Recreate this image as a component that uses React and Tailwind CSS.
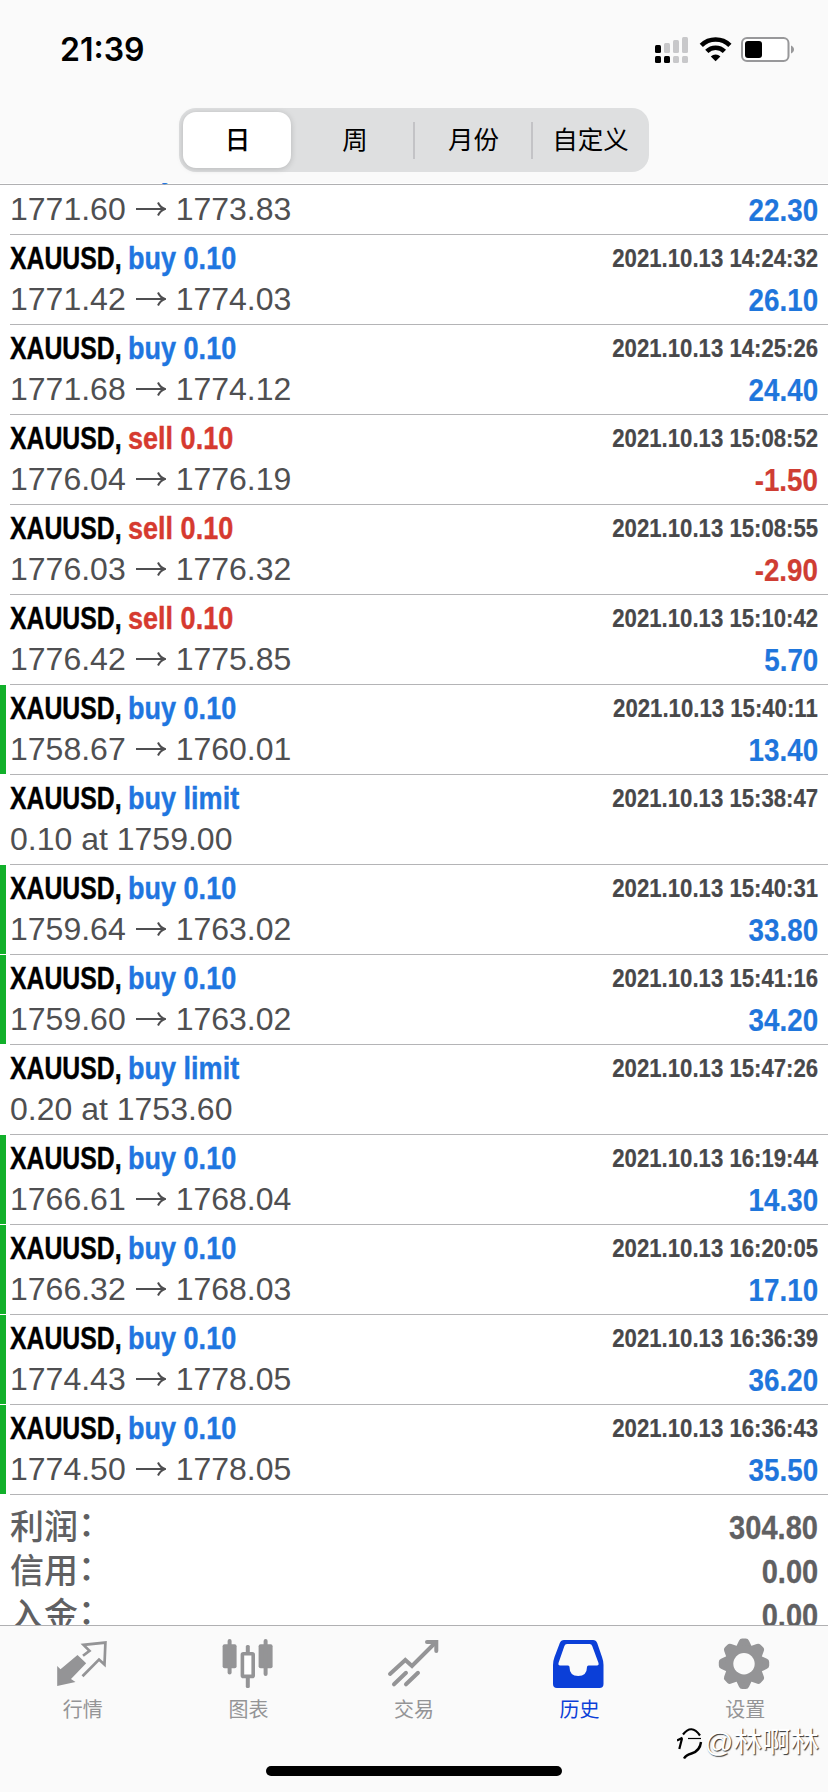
import React from 'react';

const trades = [
  { kind: 'buy 0.10', open: '1771.60', close: '1773.83', profit: '22.30' },
  { kind: 'buy 0.10', time: '2021.10.13 14:24:32', open: '1771.42', close: '1774.03', profit: '26.10' },
  { kind: 'buy 0.10', time: '2021.10.13 14:25:26', open: '1771.68', close: '1774.12', profit: '24.40' },
  { kind: 'sell 0.10', time: '2021.10.13 15:08:52', open: '1776.04', close: '1776.19', profit: '-1.50' },
  { kind: 'sell 0.10', time: '2021.10.13 15:08:55', open: '1776.03', close: '1776.32', profit: '-2.90' },
  { kind: 'sell 0.10', time: '2021.10.13 15:10:42', open: '1776.42', close: '1775.85', profit: '5.70' },
  { kind: 'buy 0.10', time: '2021.10.13 15:40:11', open: '1758.67', close: '1760.01', profit: '13.40', marked: true },
  { kind: 'buy limit', time: '2021.10.13 15:38:47', note: '0.10 at 1759.00' },
  { kind: 'buy 0.10', time: '2021.10.13 15:40:31', open: '1759.64', close: '1763.02', profit: '33.80', marked: true },
  { kind: 'buy 0.10', time: '2021.10.13 15:41:16', open: '1759.60', close: '1763.02', profit: '34.20', marked: true },
  { kind: 'buy limit', time: '2021.10.13 15:47:26', note: '0.20 at 1753.60' },
  { kind: 'buy 0.10', time: '2021.10.13 16:19:44', open: '1766.61', close: '1768.04', profit: '14.30', marked: true },
  { kind: 'buy 0.10', time: '2021.10.13 16:20:05', open: '1766.32', close: '1768.03', profit: '17.10', marked: true },
  { kind: 'buy 0.10', time: '2021.10.13 16:36:39', open: '1774.43', close: '1778.05', profit: '36.20', marked: true },
  { kind: 'buy 0.10', time: '2021.10.13 16:36:43', open: '1774.50', close: '1778.05', profit: '35.50', marked: true },
];

const summary = [
  { label: '利润', value: '304.80' },
  { label: '信用', value: '0.00' },
  { label: '入金', value: '0.00' },
];

const StatusBar = () => (
  <div className="flex h-[108px] items-start justify-between pl-[60px] pr-[33px] pt-[30px]">
    <span className="font-['Inter',sans-serif] text-[32px] font-semibold leading-[40px]">21:39</span>
    <div className="flex items-center pt-[6px]">
      <svg className="h-[28px] w-[34px]" viewBox="0 0 34 28">
        <g fill="#c8c8ca">
          <rect x="9" y="7" width="6" height="10" rx="1.5" />
          <rect x="18" y="4" width="6" height="13" rx="1.5" />
          <rect x="27" y="1" width="6" height="16" rx="1.5" />
          <rect x="18" y="20" width="6" height="7" rx="1.5" />
          <rect x="27" y="20" width="6" height="7" rx="1.5" />
        </g>
        <rect x="0" y="9" width="6" height="8" rx="1.5" />
        <rect x="0" y="20" width="6" height="7" rx="1.5" />
        <rect x="9" y="20" width="6" height="7" rx="1.5" />
      </svg>
      <svg className="ml-[10px] h-[28px] w-[34px]" viewBox="0 0 34 28">
        <g fill="none" stroke="#000" strokeWidth="4.6">
          <path d="M2.300 9.300a20.500 20.500 0 0 1 28.600 0" />
          <path d="M7.800 15.400a12.600 12.600 0 0 1 17.600 0" />
        </g>
        <path d="M16.600 25.200l-4.800-4.800a6.800 6.800 0 0 1 9.600 0z" />
      </svg>
      <svg className="ml-[8px] h-[28px] w-[54px]" viewBox="0 0 54 28">
        <rect x="1" y="2" width="46.5" height="23" rx="5" fill="#fff" stroke="#98989a" strokeWidth="2" />
        <rect x="4" y="5" width="17" height="17" rx="3" />
        <path d="M50 9.500c4 1.500 4 6.500 0 8z" fill="#98989a" />
      </svg>
    </div>
  </div>
);

const Segments = () => (
  <div className="mx-auto flex h-[64px] w-[470px] items-center rounded-[17px] bg-[#dedfe0] p-[4px] text-[25.5px] leading-none">
    <div className="flex h-[56px] w-[108px] items-center justify-center rounded-[13px] bg-white pl-px pt-[2px] font-medium shadow-[0_1px_6px_rgba(0,0,0,0.18)]">日</div>
    <div className="flex h-[37px] w-[124px] items-center justify-center border-r-2 border-[#c3c3c6] pl-[6px] pt-[2px]">周</div>
    <div className="flex h-[37px] w-[118px] items-center justify-center border-r-2 border-[#c3c3c6] pl-px pt-[2px]">月份</div>
    <div className="flex h-[37px] flex-1 items-center justify-center pl-[3px] pt-[2px]">自定义</div>
  </div>
);

const Arrow = () => (
  <svg className="mx-[10px] h-[16px] w-[30px]" viewBox="0 0 30 16" fill="none" stroke="#4f4f51" strokeWidth="2">
    <path d="M0 8h29M22 1.500c1.500 3.500 4 5.500 7 6.500-3 1-5.500 3-7 6.500" />
  </svg>
);

const Trade = ({ trade }) => {
  const kindColor = trade.kind.startsWith('sell') ? 'text-[#d63a2f]' : 'text-[#1f76e0]';
  const profitColor = trade.profit?.startsWith('-') ? 'text-[#cf3d33]' : 'text-[#1f76dc]';
  return (
    <div className="flex h-[90px] shrink-0">
      <div className={trade.marked ? 'mb-px w-[6px] bg-[#12b02a]' : 'w-[6px]'} />
      <div className="ml-[4px] flex flex-1 flex-col border-b border-[#b4b4b6] pr-[10px]">
        <div className={`flex h-[44px] items-end justify-between font-bold ${trade.time ? '' : '-translate-y-[2px]'}`}>
          <div className="flex text-[32px] leading-[41px] [-webkit-text-stroke:0.4px]">
            <span className="w-[117.5px] origin-left scale-x-[0.775] whitespace-nowrap">XAUUSD,</span>
            <span className={`origin-left scale-x-[0.845] whitespace-nowrap ${kindColor}`}>{trade.kind}</span>
          </div>
          <span className="origin-right scale-x-[0.887] text-[25px] leading-[41px] text-[#48484a] [-webkit-text-stroke:0.2px]">{trade.time}</span>
        </div>
        <div className="flex h-[40px] items-center justify-between">
          <span className="flex items-center text-[32px] leading-[40px] text-[#4f4f51]">
            {trade.note || (
              <>
                {trade.open}
                <Arrow />
                {trade.close}
              </>
            )}
          </span>
          <span className={`origin-right scale-x-[0.868] pt-px text-[32px] font-bold leading-[40px] ${profitColor} [-webkit-text-stroke:0.2px]`}>
            {trade.profit}
          </span>
        </div>
      </div>
    </div>
  );
};

const Tab = ({ label, active, children }) => (
  <div className={`flex flex-1 flex-col items-center ${active ? 'text-[#0b3fd8]' : 'text-[#949496]'}`}>
    <svg className="h-[52px] w-[52px] overflow-visible" viewBox="0 0 52 52" fill="currentColor">
      {children}
    </svg>
    <span className="mt-[7px] text-[20px] leading-[26px]">{label}</span>
  </div>
);

const TabBar = () => (
  <nav className="relative flex h-[167px] shrink-0 border-t border-[#b0b0b2] bg-[#fafafa] pt-[12px]">
    <Tab label="行情">
      <path d="M.2 28l3.300 3.300L20.500 17l8.700 8.300L14 41l4.500 3L.2 48z" />
      <path d="M26 17.800l6.500-5-6-5.900 21.900-2.300-.9 21.900-5.500-5L25.500 38.200" fill="none" stroke="currentColor" strokeWidth="2.700" />
    </Tab>
    <Tab label="图表">
      <rect x="0.600" y="6.300" width="14" height="24" rx="2" />
      <rect x="5.600" y="1" width="4" height="35.500" rx="2" />
      <rect x="36.600" y="6.300" width="14" height="24" rx="2" />
      <rect x="41.600" y="1" width="4" height="37" rx="2" />
      <rect x="23.800" y="7" width="4" height="10" rx="1.500" />
      <rect x="23.800" y="38" width="4" height="12" rx="1.500" />
      <rect x="20.400" y="15.800" width="10.800" height="22.600" rx="1" fill="#fff" stroke="currentColor" strokeWidth="3.600" />
    </Tab>
    <Tab label="交易">
      <g fill="none" stroke="currentColor" strokeWidth="4" strokeLinecap="round">
        <path d="M2 36L17.300 22l6.700 6L47 5M6 46.300l12-11.500M18 46.300l12-11.500" />
        <path d="M39 4h9.300v9" />
      </g>
    </Tab>
    <Tab label="历史" active>
      <path
        fillRule="evenodd"
        d="M10 2h29q3 0 4.200 3l4.800 14q1.500 4 1.500 8v19q0 4-4 4H3q-4 0-4-4V27q0-4 1.500-8L5.800 5q1.200-3 4.200-3zM13 6q-2 0-2.600 2L4.500 25q-.5 2.500 1.500 2.500h8q1.500 0 1.500 1.500 0 9 8.700 9t8.800-9q0-1.500 1.500-1.500h8.500q2 0 1.500-2.500L38.200 8q-.6-2-2.600-2z"
      />
    </Tab>
    <Tab label="设置">
      <g transform="translate(25 25.800)">
        {[0, 45, 90, 135, 180, 225, 270, 315].map(angle => (
          <path key={angle} d="M-8.300-16l3.300-7q1-2.200 3.200-2.200h3.600q2.200 0 3.200 2.200L8.300-16z" transform={`rotate(${angle})`} />
        ))}
        <circle r="18.700" />
        <circle r="10.700" fill="#fafafa" />
      </g>
    </Tab>
    <div className="absolute left-[266px] top-[140px] h-[10px] w-[296px] rounded-full bg-black" />
    <div className="absolute right-[9px] top-[98px] flex items-center">
      <svg className="h-[36px] w-[28px]" viewBox="0 0 28 36" fill="none" stroke="#000">
        <path d="M0 16.500l5.500-2.700M5 14.500L2.300 25M6 10.500q8.500-11 17 1" strokeWidth="2.200" />
        <path d="M11 14.500h13" strokeWidth="1.200" />
        <path d="M24 18q-1 9-9.500 11.500Q9 31 7 34.500" strokeWidth="2.400" />
      </svg>
      <span className="text-[28.500px] leading-[36px] text-white [text-shadow:1px_1px_1px_#333]">@林啊林</span>
    </div>
  </nav>
);

export default function App() {
  return (
    <div className="flex h-[1792px] w-[828px] flex-col overflow-hidden bg-white font-['Liberation_Sans','Noto_Sans_CJK_SC',sans-serif] text-black">
      <header className="relative h-[183px] shrink-0 bg-[#fafafa]">
        <StatusBar />
        <Segments />
        <div className="absolute left-0 top-[184px] h-px w-full bg-[#b0b0b2]" />
      </header>
      <main className="flex min-h-0 flex-1 flex-col overflow-hidden">
        <div className="-mt-[38px] flex shrink-0 flex-col">
          {trades.map((trade, i) => (
            <Trade key={i} trade={trade} />
          ))}
        </div>
        <div className="flex shrink-0 flex-col pl-[10px] pr-[10px] pt-[10px] text-[#606062]">
          {summary.map(row => (
            <div key={row.label} className="flex h-[44px] items-center justify-between">
              <span className="flex text-[34px] font-medium leading-[46px]">
                {row.label}
                <span className="relative -top-[3px]">：</span>
              </span>
              <span className="origin-right scale-x-[0.88] pt-px text-[33px] font-bold leading-[44px] [-webkit-text-stroke:0.3px]">{row.value}</span>
            </div>
          ))}
        </div>
      </main>
      <TabBar />
    </div>
  );
}
